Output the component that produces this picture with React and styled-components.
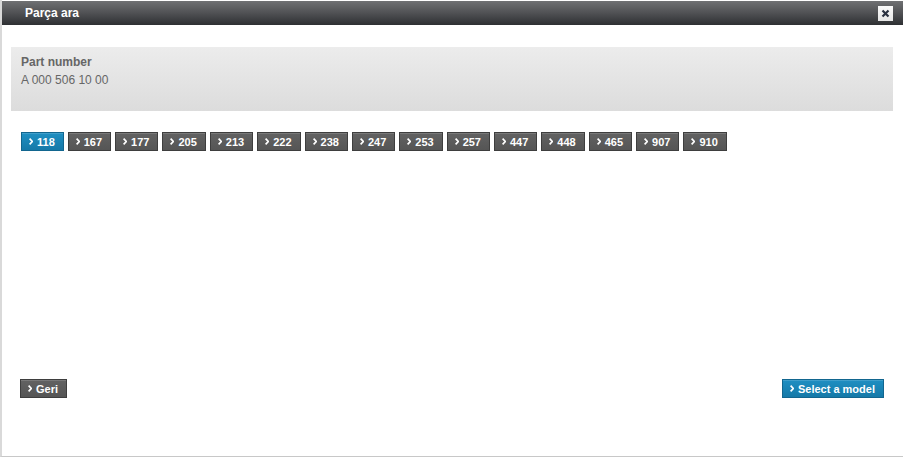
import React from "react"
import styled, {createGlobalStyle} from "styled-components"

const Global = createGlobalStyle`
  html, body { margin: 0; padding: 0; background: #fff; }
  body { font-family: "Liberation Sans", Arial, sans-serif; }
`

const Dialog = styled.div`
  box-sizing: border-box;
  width: 903px;
  height: 457px;
  background: #fff;
  border-left: 2px solid #d9d9d9;
  border-bottom: 1px solid #c8c8c8;
  display: flex;
  flex-direction: column;
`

const TitleBar = styled.div`
  margin-top: 1px;
  height: 24px;
  display: flex;
  align-items: center;
  justify-content: space-between;
  padding: 0 10px 0 23px;
  background: linear-gradient(to bottom, #707173 0%, #505154 50%, #2e3033 100%);
  color: #fff;
  font-size: 12px;
  font-weight: bold;
`

const Close = styled.button`
  width: 15px;
  height: 15px;
  padding: 0;
  border: none;
  background: linear-gradient(to bottom, #fafafa, #e6e6e6);
  display: flex;
  align-items: center;
  justify-content: center;
  cursor: pointer;
`

const Content = styled.div`
  flex: 1;
  display: flex;
  flex-direction: column;
  padding: 22px 10px 58px 9px;
`

const InfoBox = styled.div`
  height: 64px;
  box-sizing: border-box;
  padding: 6px 10px;
  background: linear-gradient(to bottom, #ececec, #dcdcdc);
  color: #666;
  font-size: 12px;
  line-height: 18px;
`

const Label = styled.div`
  font-weight: bold;
`

const ButtonRow = styled.div`
  display: flex;
  gap: 4px;
  margin: 21px 0 0 10px;
`

const Btn = styled.button`
  height: 19px;
  box-sizing: border-box;
  display: inline-flex;
  align-items: center;
  gap: 4px;
  padding: 0 8px 0 7px;
  font-family: "Liberation Sans", Arial, sans-serif;
  font-size: 11px;
  font-weight: bold;
  color: #fff;
  cursor: pointer;
  border: 1px solid ${p => (p.$active ? "#12668f" : "#3e3e3e")};
  background: ${p =>
    p.$active
      ? "linear-gradient(to bottom, #1f8fc2, #1579a8)"
      : "linear-gradient(to bottom, #626262, #555555)"};
  box-shadow: inset 0 1px 0 rgba(255, 255, 255, 0.15);
`

const Footer = styled.div`
  margin-top: auto;
  display: flex;
  justify-content: space-between;
  padding: 0 9px;
`

const Chevron = () => (
  <svg width="4" height="7" viewBox="0 0 4 7">
    <path d="M0.6 0.7 L3.3 3.5 L0.6 6.3" fill="none" stroke="#fff" strokeWidth="1.7" />
  </svg>
)

const numbers = ["118", "167", "177", "205", "213", "222", "238", "247", "253", "257", "447", "448", "465", "907", "910"]

export default function App() {
  return (
    <>
      <Global />
      <Dialog>
        <TitleBar>
          <span>Parça ara</span>
          <Close aria-label="close">
            <svg width="9" height="9" viewBox="0 0 9 9">
              <path d="M1.5 1.5 L7.5 7.5 M7.5 1.5 L1.5 7.5" stroke="#2a3140" strokeWidth="2.2" />
            </svg>
          </Close>
        </TitleBar>
        <Content>
          <InfoBox>
            <Label>Part number</Label>
            <div>A 000 506 10 00</div>
          </InfoBox>
          <ButtonRow>
            {numbers.map((n, i) => (
              <Btn key={n} $active={i === 0}>
                <Chevron />
                {n}
              </Btn>
            ))}
          </ButtonRow>
          <Footer>
            <Btn>
              <Chevron />
              Geri
            </Btn>
            <Btn $active>
              <Chevron />
              Select a model
            </Btn>
          </Footer>
        </Content>
      </Dialog>
    </>
  )
}
